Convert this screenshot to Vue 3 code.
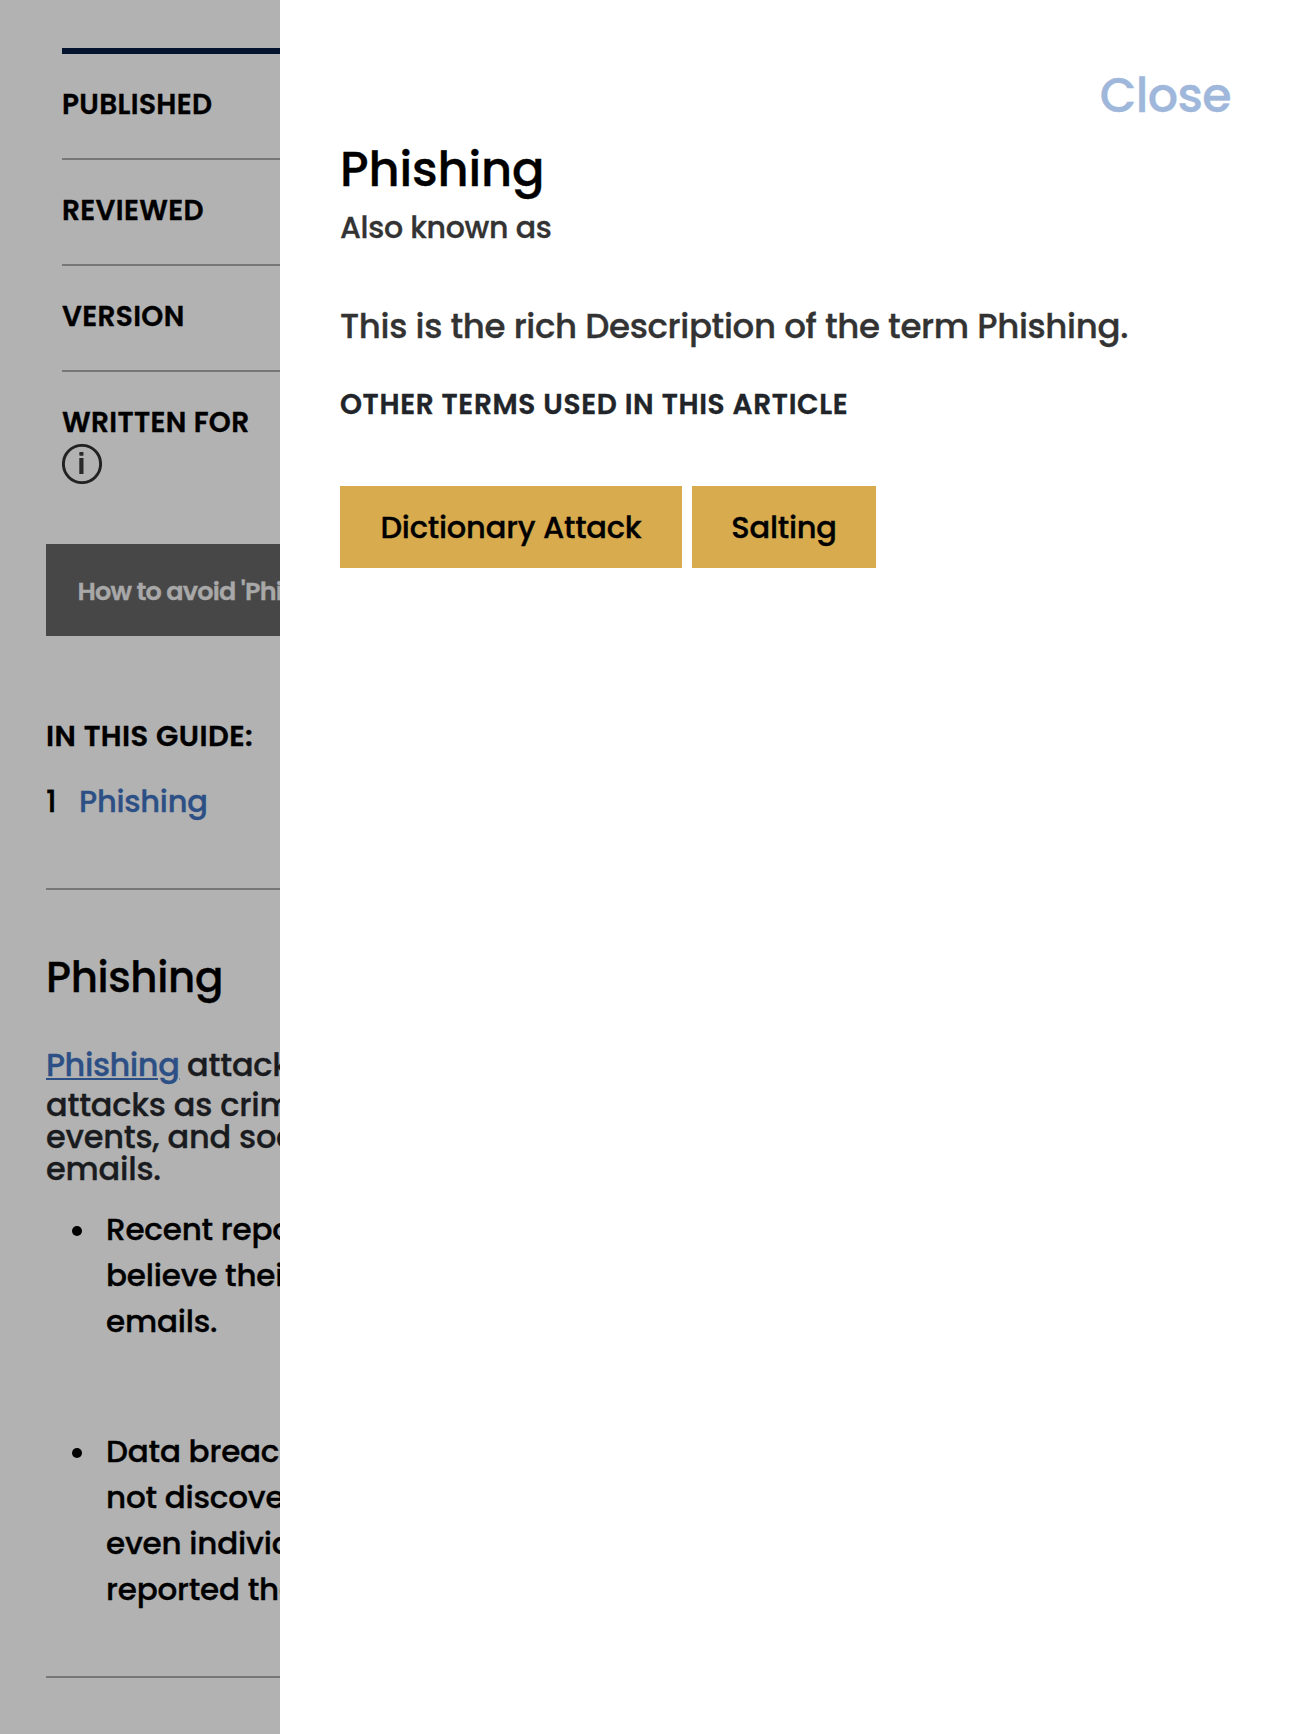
<script setup>
const meta = [
  { label: 'Published' },
  { label: 'Reviewed' },
  { label: 'Version' },
  { label: 'Written for', info: true }
]
const points = [
  ['Recent reports', 'believe their', 'emails.'],
  ['Data breaches', 'not discovered', 'even individuals', 'reported that']
]
const terms = ['Dictionary Attack', 'Salting']
</script>

<template>
  <div class="screen">
    <main class="page">
      <section class="meta">
        <div v-for="m in meta" :key="m.label" class="meta-row">
          <div class="meta-label">{{ m.label }}</div>
          <svg v-if="m.info" class="info" viewBox="0 0 40 40" fill="none">
            <circle cx="20" cy="20" r="18.6" stroke="#222" stroke-width="2.9" />
            <rect x="17.3" y="7.9" width="4.2" height="3.8" rx="0.8" fill="#2a2a2a" />
            <rect x="17.3" y="14" width="4.2" height="16" fill="#2a2a2a" />
          </svg>
        </div>
      </section>

      <div class="banner">How to avoid 'Phishing'</div>

      <h4 class="guide-title">In this guide:</h4>
      <div class="guide-item"><span class="num">1</span><a>Phishing</a></div>
      <hr class="rule" />

      <h2 class="heading">Phishing</h2>
      <div class="intro">
        <div class="lead"><a>Phishing</a> attacks</div>
        <div>attacks as criminals</div>
        <div>events, and social</div>
        <div>emails.</div>
      </div>
      <ul class="points">
        <li v-for="(lines, i) in points" :key="i">
          <div v-for="line in lines" :key="line">{{ line }}</div>
        </li>
      </ul>
      <hr class="rule end" />
    </main>

    <aside class="panel">
      <button class="close">Close</button>
      <h1 class="term">Phishing</h1>
      <p class="aka">Also known as</p>
      <p class="desc">This is the rich Description of the term Phishing.</p>
      <h3 class="other">Other terms used in this article</h3>
      <div class="chips">
        <button v-for="t in terms" :key="t" class="chip">{{ t }}</button>
      </div>
    </aside>
  </div>
</template>

<style>
body {
  margin: 0;
  background: #b2b2b2;
}
</style>

<style scoped>
.screen {
  display: flex;
  width: 1290px;
  height: 1734px;
  overflow: hidden;
  background: #b2b2b2;
  color: #000;
  font-family: Poppins, Inter, sans-serif;
  font-weight: 500;
  -webkit-text-stroke: 0.35px currentColor;
}
h1, h2, h3, h4, p, ul {
  margin: 0;
  padding: 0;
}
button {
  border: 0;
  padding: 0;
  font: inherit;
}
.page {
  box-sizing: border-box;
  width: 280px;
  flex: none;
  padding: 48px 0 0 46px;
  overflow: hidden;
  white-space: nowrap;
}
.page a {
  color: #2c4f85;
}
.meta {
  margin-left: 16px;
  border-top: 6px solid #04142f;
}
.meta-row {
  box-sizing: border-box;
  height: 106px;
  padding-top: 35px;
  border-bottom: 2px solid #777;
}
.meta-row:last-child {
  height: 112px;
  border-bottom: 0;
}
.meta-label {
  font-size: 28px;
  font-weight: 600;
  line-height: 32px;
  letter-spacing: 0.35px;
  text-transform: uppercase;
}
.info {
  display: block;
  width: 40px;
  height: 40px;
  margin-top: 5px;
}
.banner {
  height: 92px;
  margin-top: 60px;
  padding-left: 31.5px;
  background: #474747;
  color: #a8a8a8;
  font-size: 25.5px;
  font-weight: 600;
  line-height: 95px;
  letter-spacing: -0.8px;
}
.guide-title {
  margin-top: 84px;
  font-size: 29px;
  font-weight: 600;
  line-height: 32px;
  letter-spacing: 0.45px;
  text-transform: uppercase;
}
.guide-item {
  display: flex;
  margin-top: 30px;
  font-size: 30.5px;
  line-height: 40px;
  letter-spacing: -0.25px;
}
.num {
  width: 33px;
}
.rule {
  height: 2px;
  margin: 66px 0 0;
  border: 0;
  background: #777;
}
.heading {
  margin-top: 64px;
  font-size: 42px;
  font-weight: 500;
  line-height: 48px;
  letter-spacing: -0.35px;
}
.intro {
  margin-top: 47px;
  color: #191b1e;
  font-size: 32px;
  line-height: 32px;
  letter-spacing: -0.22px;
}
.lead {
  margin-bottom: 8px;
}
.lead a {
  margin-right: -0.5px;
  letter-spacing: -0.45px;
  text-decoration: underline;
  text-decoration-thickness: 2px;
  text-underline-offset: 2px;
}
.points {
  margin-top: 21px;
  list-style: none;
  font-size: 31px;
  line-height: 46px;
  letter-spacing: -0.2px;
}
.points li {
  position: relative;
  padding-left: 60px;
}
.points li + li {
  margin-top: 84px;
}
.points li::before {
  content: "";
  position: absolute;
  left: 26px;
  top: 20px;
  width: 10px;
  height: 10px;
  border-radius: 50%;
  background: #000;
}
.rule.end {
  margin-top: 64px;
}
.panel {
  box-sizing: border-box;
  display: flex;
  flex: 1;
  flex-direction: column;
  padding: 72px 59px 0 60px;
  background: #fff;
}
.close {
  align-self: flex-end;
  background: none;
  color: #9eb7da;
  font-size: 47.5px;
  line-height: 48px;
  letter-spacing: -0.6px;
}
.term {
  margin-top: 25px;
  font-size: 48px;
  font-weight: 500;
  line-height: 50px;
  letter-spacing: -0.15px;
}
.aka {
  margin-top: 13px;
  color: #333;
  font-size: 30px;
  line-height: 40px;
  letter-spacing: -0.3px;
}
.desc {
  margin-top: 58px;
  color: #333;
  font-size: 34px;
  line-height: 40px;
  letter-spacing: -0.34px;
}
.other {
  margin-top: 43px;
  color: #212529;
  font-size: 28px;
  font-weight: 600;
  line-height: 32px;
  letter-spacing: 0.64px;
  text-transform: uppercase;
}
.chips {
  display: flex;
  gap: 10px;
  margin-top: 65px;
}
.chip {
  width: 342px;
  height: 82px;
  padding-top: 2px;
  background: #d8ac4e;
  color: #000;
  font-size: 30.5px;
  letter-spacing: -0.2px;
}
.chip + .chip {
  width: 184px;
}
</style>
